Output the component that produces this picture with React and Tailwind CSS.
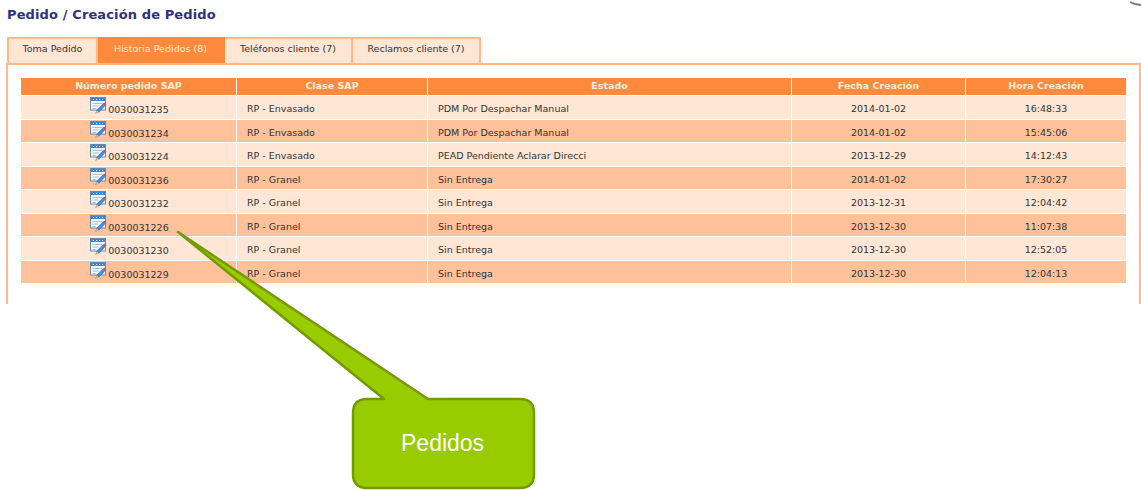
const tabs = [
  { label: "Toma Pedido", width: "w-[91px]" },
  { label: "Historia Pedidos (8)", width: "w-[127px]", active: true },
  { label: "Teléfonos cliente (7)", width: "w-[128px]" },
  { label: "Reclamos cliente (7)", width: "w-[128px]" },
];

const rows = [
  ["0030031235", "RP - Envasado", "PDM Por Despachar Manual", "2014-01-02", "16:48:33"],
  ["0030031234", "RP - Envasado", "PDM Por Despachar Manual", "2014-01-02", "15:45:06"],
  ["0030031224", "RP - Envasado", "PEAD Pendiente Aclarar Direcci", "2013-12-29", "14:12:43"],
  ["0030031236", "RP - Granel", "Sin Entrega", "2014-01-02", "17:30:27"],
  ["0030031232", "RP - Granel", "Sin Entrega", "2013-12-31", "12:04:42"],
  ["0030031226", "RP - Granel", "Sin Entrega", "2013-12-30", "11:07:38"],
  ["0030031230", "RP - Granel", "Sin Entrega", "2013-12-30", "12:52:05"],
  ["0030031229", "RP - Granel", "Sin Entrega", "2013-12-30", "12:04:13"],
];

const EditIcon = () => (
  <svg width="17" height="17" viewBox="0 0 17 17" className="mr-px shrink-0 -mt-[9px]">
    <rect x="0.5" y="0.5" width="15" height="12.5" fill="#f4f8fc" stroke="#6d87a8" />
    <rect x="1" y="1" width="14" height="3" fill="#3b86d6" />
    <path d="M3 2.5h1M6 2.5h1M9 2.5h1M12 2.5h1" stroke="#dcecff" strokeWidth="1" />
    <path d="M2.5 6.5h10M2.5 9h6M2.5 11.5h3" stroke="#a9bdd4" strokeWidth="1" />
    <path d="M6.8 13.2l6.2-6.4 2 2-6.2 6.4z" fill="#3f8fe0" stroke="#2b5f9e" strokeWidth="0.5" />
    <path d="M13 6.8l1.4-1.4 2 2-1.4 1.4z" fill="#e0453a" />
    <path d="M6.8 13.2l-1.3 3.3 3.3-1.3z" fill="#e8cfa0" stroke="#555555" strokeWidth="0.3" />
  </svg>
);

const Callout = () => (
  <div className="absolute left-[170px] top-[225px] w-[370px] h-[268px]">
    <svg width="370" height="268" viewBox="170 225 370 268" className="absolute inset-0">
      <path
        d="M178 232 L428 399 H520 Q534 399 534 413 V474 Q534 488 520 488 H367 Q353 488 353 474 V413 Q353 399 367 399 H384 Z"
        fill="#99cc00"
        stroke="#739a00"
        strokeWidth="2.5"
        strokeLinejoin="round"
      />
    </svg>
    <span className="absolute left-[231px] top-[204px] text-[23px] leading-[28px] text-white font-['Liberation_Sans',sans-serif]">
      Pedidos
    </span>
  </div>
);

export default function App() {
  return (
    <div className="relative w-[1141px] h-[490px] overflow-hidden bg-white font-['DejaVu_Sans',sans-serif]">
      <svg width="12" height="7" viewBox="0 0 12 7" className="absolute right-0 top-0">
        <path d="M1 2 Q6 5 12 5" stroke="#777777" strokeWidth="2" fill="none" />
      </svg>

      <div className="pl-[6px] pt-[6px]">
        <h1 className="pl-px text-[13px] leading-[17px] font-bold tracking-[0.12px] text-[#2e3180]">
          Pedido / Creación de Pedido
        </h1>

        <div className="mt-[14px] ml-px flex h-[26px]">
          {tabs.map((tab) => (
            <div
              key={tab.label}
              className={`${tab.width} flex items-center justify-center border-t-2 border-r-2 pb-[3px] text-[9.5px] ${
                tab.active
                  ? "border-[#ff8a3c] bg-[#ff8a3c] text-[#ffe9d9]"
                  : "border-[#ffb98a] bg-[#ffe6d5] text-[#333333]"
              } ${tab.label === "Toma Pedido" ? "border-l-2" : ""}`}
            >
              {tab.label}
            </div>
          ))}
        </div>

        <div className="h-[241px] w-[1135px] border-x-2 border-t-2 border-[#ffb98a] pl-[12px] pt-[12px]">
          <table className="w-[1107px] table-fixed border-separate border-spacing-[1px] text-[9.5px] text-[#333333]">
            <colgroup>
              <col className="w-[215px]" />
              <col className="w-[190px]" />
              <col className="w-[363px]" />
              <col className="w-[173px]" />
              <col className="w-[160px]" />
            </colgroup>
            <thead>
              <tr className="h-[17px] bg-[#ff8a3c] font-bold text-[#ffeede]">
                <th className="p-0 text-center font-bold">Número pedido SAP</th>
                <th className="p-0 text-center font-bold">Clase SAP</th>
                <th className="p-0 text-center font-bold">Estado</th>
                <th className="p-0 text-center font-bold">Fecha Creación</th>
                <th className="p-0 text-center font-bold">Hora Creación</th>
              </tr>
            </thead>
            <tbody>
              {rows.map((row, i) => (
                <tr key={row[0]} className={`h-[22.5px] ${i % 2 ? "bg-[#ffc19a]" : "bg-[#ffe6d5]"}`}>
                  <td className="p-0">
                    <div className="flex items-center justify-center pl-[2px] pt-[6px]">
                      <EditIcon />
                      <span>{row[0]}</span>
                    </div>
                  </td>
                  <td className="p-0 pl-[10px] pt-[4px]">{row[1]}</td>
                  <td className="p-0 pl-[10px] pt-[4px]">{row[2]}</td>
                  <td className="p-0 pt-[4px] text-center">{row[3]}</td>
                  <td className="p-0 pt-[4px] text-center">{row[4]}</td>
                </tr>
              ))}
            </tbody>
          </table>
        </div>
      </div>

      <Callout />
    </div>
  );
}
